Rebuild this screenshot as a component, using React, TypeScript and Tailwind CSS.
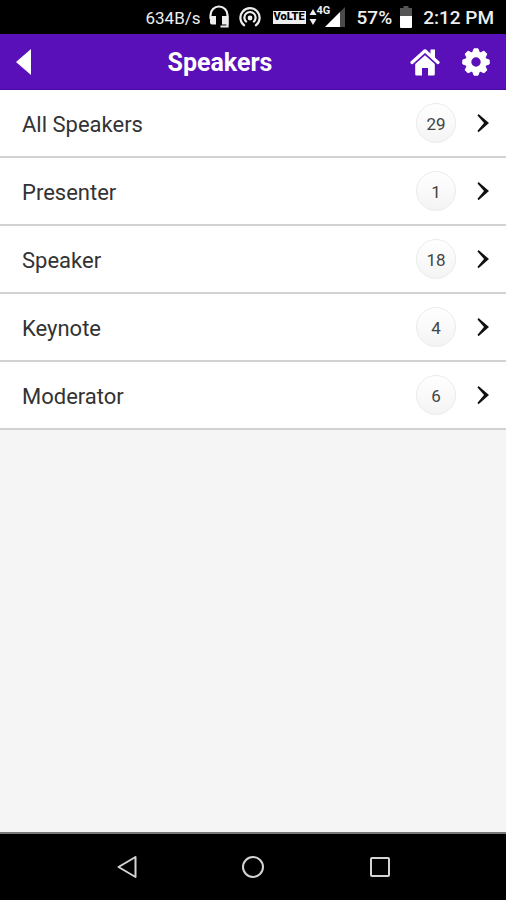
import React from 'react';

interface SpeakerGroup {
  id: string;
  label: string;
  count: number;
}

const groups: SpeakerGroup[] = [
  { id: 'all', label: 'All Speakers', count: 29 },
  { id: 'presenter', label: 'Presenter', count: 1 },
  { id: 'speaker', label: 'Speaker', count: 18 },
  { id: 'keynote', label: 'Keynote', count: 4 },
  { id: 'moderator', label: 'Moderator', count: 6 },
];

function HeadsetIcon() {
  return (
    <svg width="20" height="24" viewBox="0 0 20 24" fill="none">
      <path d="M1.500 14V10a8.500 8.500 0 0 1 17 0v11.500H11.500" stroke="#eee" strokeWidth="2.200" />
      <path d="M1 11h6v8.500H3A2 2 0 0 1 1 17.500zM13 11h6.500v8.500H13z" fill="#eee" />
    </svg>
  );
}

function HotspotIcon() {
  return (
    <svg width="22" height="20" viewBox="0 0 22 20" fill="none" stroke="#eee" strokeWidth="2.200">
      <path d="M5.800 18.800a9.600 9.600 0 1 1 10.400 0" />
      <path d="M7.800 15.200a5.600 5.600 0 1 1 6.400 0" />
      <circle cx="11" cy="11" r="2.400" fill="#eee" stroke="none" />
    </svg>
  );
}

function DataArrowsIcon() {
  return (
    <svg width="8" height="18" viewBox="0 0 8 18" fill="#eee">
      <path d="M4 1l3.500 6h-7zM4 17l3.500-6h-7z" />
    </svg>
  );
}

function SignalIcon() {
  return (
    <svg width="20" height="20" viewBox="0 0 20 20">
      <path d="M20 0v20H0z" fill="#4a4a4a" />
      <path d="M15 5v15H0z" fill="#fff" />
    </svg>
  );
}

function BatteryIcon() {
  return (
    <svg width="12" height="22" viewBox="0 0 12 22">
      <path d="M3.500 0h5v2H12v8H0V2h3.500z" fill="#555" />
      <path d="M0 10h12v11a1 1 0 0 1-1 1H1a1 1 0 0 1-1-1z" fill="#fff" />
    </svg>
  );
}

function HomeIcon() {
  return (
    <svg width="30" height="28" viewBox="0 0 30 28" fill="none">
      <path d="M20.500 1.500h4.500v9l-4.500-4z" fill="#fff" />
      <path d="M2 14.500L15 2.800l13 11.700" stroke="#fff" strokeWidth="3.200" strokeLinecap="round" strokeLinejoin="round" />
      <path d="M15 7.200l9.800 8.800v10.200a1.300 1.300 0 0 1-1.300 1.300H18v-7.500h-6v7.500H6.500a1.300 1.300 0 0 1-1.300-1.300V16z" fill="#fff" />
    </svg>
  );
}

function GearIcon() {
  return (
    <svg width="28" height="28" viewBox="0 0 28 28">
      <g fill="#fff" stroke="#fff" strokeLinejoin="round">
        <path d="M12 0.800h4l1.900 5.200h-7.800z" />
        <path d="M12 0.800h4l1.900 5.200h-7.800z" transform="rotate(45 14 14)" />
        <path d="M12 0.800h4l1.900 5.200h-7.800z" transform="rotate(90 14 14)" />
        <path d="M12 0.800h4l1.900 5.200h-7.800z" transform="rotate(135 14 14)" />
        <path d="M12 0.800h4l1.900 5.200h-7.800z" transform="rotate(180 14 14)" />
        <path d="M12 0.800h4l1.900 5.200h-7.800z" transform="rotate(225 14 14)" />
        <path d="M12 0.800h4l1.900 5.200h-7.800z" transform="rotate(270 14 14)" />
        <path d="M12 0.800h4l1.900 5.200h-7.800z" transform="rotate(315 14 14)" />
      </g>
      <circle cx="14" cy="14" r="7.500" fill="none" stroke="#fff" strokeWidth="5.600" />
    </svg>
  );
}

function StatusBar() {
  return (
    <div className="flex h-[34px] items-center justify-end bg-black pr-3 text-[#eee]">
      <span className="mr-2 pt-[3px] text-[17px]">634B/s</span>
      <HeadsetIcon />
      <span className="ml-[10px]">
        <HotspotIcon />
      </span>
      <span className="ml-3 flex h-[13px] w-[33px] items-center justify-center bg-[#eee] text-[11px] font-black text-black">
        VoLTE
      </span>
      <span className="ml-[3px]">
        <DataArrowsIcon />
      </span>
      <div className="relative ml-2">
        <SignalIcon />
        <span className="absolute -top-0.5 -left-2 text-[11px] leading-3 font-bold">4G</span>
      </div>
      <span className="ml-3 pt-[3px] text-[19px] font-medium">57%</span>
      <span className="ml-2">
        <BatteryIcon />
      </span>
      <span className="ml-[11px] pt-[3px] text-[19px] font-medium">2:12 PM</span>
    </div>
  );
}

function Header() {
  return (
    <header className="grid h-14 grid-cols-[1fr_auto_1fr] items-center border-b border-[#4a0aa0] bg-[#5a10b8] px-4 text-white">
      <button aria-label="Back" className="justify-self-start">
        <svg width="16" height="26" viewBox="0 0 16 26" fill="#fff">
          <path d="M15 0v26L0 13z" />
        </svg>
      </button>
      <h1 className="mr-[66px] pt-[3px] text-[25px] font-bold">Speakers</h1>
      <div className="flex items-center gap-[22px] justify-self-end">
        <button aria-label="Home">
          <HomeIcon />
        </button>
        <button aria-label="Settings">
          <GearIcon />
        </button>
      </div>
    </header>
  );
}

function GroupRow({ group }: { group: SpeakerGroup }) {
  return (
    <li>
      <button className="flex h-[68px] w-full items-center border-b-2 border-[#d2d2d2] bg-white pr-4 pl-[22px] text-left">
        <span className="flex-1 pt-[3px] text-[22px] text-[#333]">{group.label}</span>
        <span className="flex size-10 items-center justify-center rounded-full border border-[#ebebeb] bg-linear-to-b from-white to-[#f4f4f4] pt-[3px] text-[17px] text-[#444]">
          {group.count}
        </span>
        <svg className="ml-5" width="14" height="20" viewBox="0 0 14 20" fill="#111">
          <path d="M2.500 1L13 10 2.500 19.200 1.500 17.800 8 10 1.500 2.400z" />
        </svg>
      </button>
    </li>
  );
}

function NavBar() {
  return (
    <nav className="grid h-[68px] grid-cols-[1fr_auto_1fr] items-center border-t-2 border-[#777] bg-black px-[116px]">
      <button aria-label="System back" className="justify-self-start">
        <svg width="22" height="24" viewBox="0 0 22 24" fill="none" stroke="#d4d4d4" strokeWidth="2" strokeLinejoin="round">
          <path d="M19.500 2v20L2.500 12z" />
        </svg>
      </button>
      <button aria-label="System home">
        <svg width="24" height="24" viewBox="0 0 24 24" fill="none" stroke="#d4d4d4" strokeWidth="2">
          <circle cx="12" cy="12" r="10" />
        </svg>
      </button>
      <button aria-label="Recent apps" className="justify-self-end">
        <svg width="20" height="20" viewBox="0 0 20 20" fill="none" stroke="#d4d4d4" strokeWidth="2">
          <rect x="1" y="1" width="18" height="18" rx="1" />
        </svg>
      </button>
    </nav>
  );
}

export default function App() {
  return (
    <div className="flex min-h-screen flex-col bg-[#f5f5f5] font-['Roboto',sans-serif]">
      <StatusBar />
      <Header />
      <main className="flex-1">
        <ul>
          {groups.map(group => (
            <GroupRow key={group.id} group={group} />
          ))}
        </ul>
      </main>
      <NavBar />
    </div>
  );
}
